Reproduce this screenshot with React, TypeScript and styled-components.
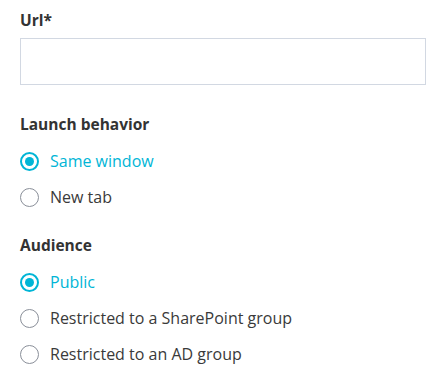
import React, { useState } from "react";
import styled, { createGlobalStyle } from "styled-components";

const GlobalStyle = createGlobalStyle`
  html, body {
    margin: 0;
    padding: 0;
    background: #ffffff;
  }
  body {
    font-family: "Open Sans", "Noto Sans", sans-serif;
  }
`;

const Form = styled.div`
  padding: 10px 17px 0 20px;
  display: flex;
  flex-direction: column;
  width: 406px;
`;

const Label = styled.div<{ $top?: number }>`
  font-size: 15.5px;
  font-weight: 700;
  color: #333333;
  line-height: 20px;
  margin-top: ${(p) => p.$top ?? 0}px;
`;

const Input = styled.input`
  box-sizing: border-box;
  width: 406px;
  height: 47px;
  margin-top: 8px;
  border: 1px solid #d2d8e2;
  outline: none;
  padding: 0 10px;
  font-family: inherit;
  font-size: 16px;
`;

const Group = styled.div`
  display: flex;
  flex-direction: column;
  margin-top: 17px;
  gap: 16px;
`;

const Option = styled.label<{ $checked: boolean }>`
  display: flex;
  align-items: center;
  gap: 11px;
  height: 20px;
  font-size: 16px;
  color: ${(p) => (p.$checked ? "#00b5d6" : "#3a3a3a")};
  cursor: pointer;
`;

const Circle = styled.span<{ $checked: boolean }>`
  box-sizing: border-box;
  width: 19px;
  height: 19px;
  border-radius: 50%;
  border-style: solid;
  border-color: ${(p) => (p.$checked ? "#00b5d6" : "#8a8f99")};
  border-width: ${(p) => (p.$checked ? 2 : 1)}px;
  display: flex;
  align-items: center;
  justify-content: center;
  flex-shrink: 0;

  &::after {
    content: "";
    width: 9px;
    height: 9px;
    border-radius: 50%;
    background: #00b5d6;
    display: ${(p) => (p.$checked ? "block" : "none")};
  }
`;

interface RadioGroupProps {
  options: string[];
  value: string;
  onChange: (v: string) => void;
}

const RadioGroup: React.FC<RadioGroupProps> = ({ options, value, onChange }) => (
  <Group>
    {options.map((o) => (
      <Option key={o} $checked={o === value} onClick={() => onChange(o)}>
        <Circle $checked={o === value} />
        {o}
      </Option>
    ))}
  </Group>
);

export default function App() {
  const [launch, setLaunch] = useState("Same window");
  const [audience, setAudience] = useState("Public");
  return (
    <>
      <GlobalStyle />
      <Form>
        <Label>Url*</Label>
        <Input />
        <Label $top={29}>Launch behavior</Label>
        <RadioGroup
          options={["Same window", "New tab"]}
          value={launch}
          onChange={setLaunch}
        />
        <Label $top={28}>Audience</Label>
        <RadioGroup
          options={[
            "Public",
            "Restricted to a SharePoint group",
            "Restricted to an AD group",
          ]}
          value={audience}
          onChange={setAudience}
        />
      </Form>
    </>
  );
}
